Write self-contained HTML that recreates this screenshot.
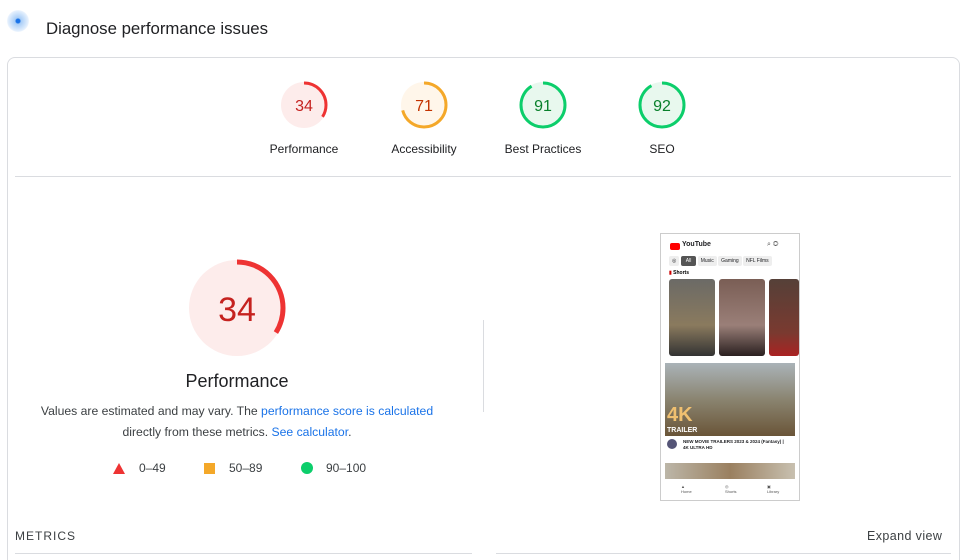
<!DOCTYPE html><html style="overflow:hidden;height:560px"><head><style>
body{margin:0;width:960px;height:560px;overflow:hidden;background:#fff;font-family:"Liberation Sans",Arial,sans-serif;position:relative;color:#202124}
.a{position:absolute}
.lab{position:absolute;font-size:12px;color:#202124;text-align:center;width:120px}
</style></head><body>
<div class="a" style="left:7px;top:10px;width:22px;height:22px;border-radius:50%;background:radial-gradient(circle,#1a73e8 0 2px,#a8cdf7 3px,#e3effd 10px,#fff 12px)"></div>
<div class="a" style="left:46px;top:19px;font-size:16.8px;color:#202124">Diagnose performance issues</div>
<div class="a" style="left:7px;top:57px;width:951px;height:520px;border:1px solid #dadce0;border-radius:8px"></div>
<div class="a" style="left:15px;top:176px;width:936px;height:1px;background:#dadce0"></div>
<svg class="a" style="left:0;top:0" width="960" height="560">
<g font-family="Liberation Sans,Arial" text-anchor="middle">
<circle cx="304" cy="105" r="23" fill="#fdeceb"/><circle cx="304" cy="105" r="22" fill="none" stroke="#e33" stroke-width="3" stroke-dasharray="47 200" transform="rotate(-90 304 105)"/><text x="304" y="111" font-size="16" fill="#c5221f">34</text>
<circle cx="424" cy="105" r="23" fill="#fff6ea"/><circle cx="424" cy="105" r="22" fill="none" stroke="#f4a829" stroke-width="3" stroke-dasharray="98 200" transform="rotate(-90 424 105)"/><text x="424" y="111" font-size="16" fill="#c33300">71</text>
<circle cx="543" cy="105" r="23" fill="#e8f8ee"/><circle cx="543" cy="105" r="22" fill="none" stroke="#0cce6b" stroke-width="3" stroke-dasharray="126 200" transform="rotate(-90 543 105)"/><text x="543" y="111" font-size="16" fill="#08802b">91</text>
<circle cx="662" cy="105" r="23" fill="#e8f8ee"/><circle cx="662" cy="105" r="22" fill="none" stroke="#0cce6b" stroke-width="3" stroke-dasharray="127 200" transform="rotate(-90 662 105)"/><text x="662" y="111" font-size="16" fill="#08802b">92</text>
<circle cx="237" cy="308" r="48" fill="#fdeceb"/><circle cx="237" cy="308" r="46" fill="none" stroke="#e33" stroke-width="5" stroke-dasharray="98 400" transform="rotate(-90 237 308)"/><text x="237" y="321" font-size="34" fill="#c5221f">34</text>
<polygon points="119,463 125,474 113,474" fill="#e33"/>
<rect x="204" y="463" width="11" height="11" fill="#f4a829"/>
<circle cx="307" cy="468" r="6" fill="#0cce6b"/>
</g></svg>
<div class="lab" style="left:244px;top:142px">Performance</div>
<div class="lab" style="left:364px;top:142px">Accessibility</div>
<div class="lab" style="left:483px;top:142px">Best Practices</div>
<div class="lab" style="left:602px;top:142px">SEO</div>
<div class="a" style="left:137px;top:371px;width:200px;text-align:center;font-size:18px">Performance</div>
<div class="a" style="left:30px;top:401px;width:414px;text-align:center;font-size:12.2px;line-height:21px;color:#3c4043">Values are estimated and may vary. The <span style="color:#1a73e8">performance score is calculated</span><br>directly from these metrics. <span style="color:#1a73e8">See calculator</span>.</div>
<div class="a" style="left:139px;top:461px;font-size:12px;color:#3c4043">0–49</div>
<div class="a" style="left:229px;top:461px;font-size:12px;color:#3c4043">50–89</div>
<div class="a" style="left:326px;top:461px;font-size:12px;color:#3c4043">90–100</div>
<div class="a" style="left:483px;top:320px;width:1px;height:92px;background:#dadce0"></div>
<div class="a" style="left:660px;top:233px;width:138px;height:266px;border:1px solid #ccc;background:#fff;overflow:hidden">
 <div class="a" style="left:9px;top:9px;width:10px;height:7px;background:#f00;border-radius:2px"></div>
 <div class="a" style="left:21px;top:7px;font-size:7px;font-weight:bold">YouTube</div>
 <div class="a" style="left:106px;top:7px;font-size:7px;color:#555">⌕ ◎</div>
 <div class="a" style="left:8px;top:22px;width:130px;height:11px;font-size:5px;white-space:nowrap">
  <span style="display:inline-block;background:#eee;border-radius:2px;padding:2px 3px">◎</span>
  <span style="display:inline-block;background:#555;color:#fff;border-radius:2px;padding:2px 5px">All</span>
  <span style="display:inline-block;background:#eee;border-radius:2px;padding:2px 3px">Music</span>
  <span style="display:inline-block;background:#eee;border-radius:2px;padding:2px 3px">Gaming</span>
  <span style="display:inline-block;background:#eee;border-radius:2px;padding:2px 3px">NFL Films</span></div>
 <div class="a" style="left:8px;top:36px;font-size:5px;font-weight:bold;color:#c00">▮ <span style="color:#000">Shorts</span></div>
 <div class="a" style="left:8px;top:45px;width:46px;height:77px;background:linear-gradient(#6b6a66,#8a7a5e 60%,#333);border-radius:3px"></div>
 <div class="a" style="left:58px;top:45px;width:46px;height:77px;background:linear-gradient(#7a5e55,#9a7f78 60%,#2a2020);border-radius:3px"></div>
 <div class="a" style="left:108px;top:45px;width:30px;height:77px;background:linear-gradient(#554038,#7a3a30 70%,#a22);border-radius:3px"></div>
 <div class="a" style="left:4px;top:129px;width:130px;height:73px;background:linear-gradient(#aab3b8,#8a8470 50%,#6a5538)"></div>
 <div class="a" style="left:6px;top:170px;font-size:20px;font-weight:bold;color:#f0c070">4K</div>
 <div class="a" style="left:6px;top:193px;font-size:7px;font-weight:bold;color:#fff">TRAILER</div>
 <div class="a" style="left:6px;top:205px;width:10px;height:10px;border-radius:50%;background:#557"></div>
 <div class="a" style="left:22px;top:205px;font-size:4.5px;font-weight:bold;line-height:6px">NEW MOVIE TRAILERS 2023 &amp; 2024 (Fantasy) |<br>4K ULTRA HD</div>
 <div class="a" style="left:4px;top:229px;width:130px;height:16px;background:linear-gradient(90deg,#bcb6a8,#9a8060,#c8c0b0)"></div>
 <div class="a" style="left:0;top:247px;width:138px;height:19px;background:#fff;font-size:4px;color:#555">
  <span class="a" style="left:20px;top:3px">▲<br>Home</span><span class="a" style="left:64px;top:3px">◎<br>Shorts</span><span class="a" style="left:106px;top:3px">▣<br>Library</span></div>
</div>
<div class="a" style="left:15px;top:529px;font-size:12px;letter-spacing:1px;color:#3c4043">METRICS</div>
<div class="a" style="left:867px;top:529px;font-size:12.5px;color:#3c4043;letter-spacing:.4px">Expand view</div>
<div class="a" style="left:15px;top:553px;width:457px;height:1px;background:#dadce0"></div>
<div class="a" style="left:496px;top:553px;width:455px;height:1px;background:#dadce0"></div>
</body></html>
